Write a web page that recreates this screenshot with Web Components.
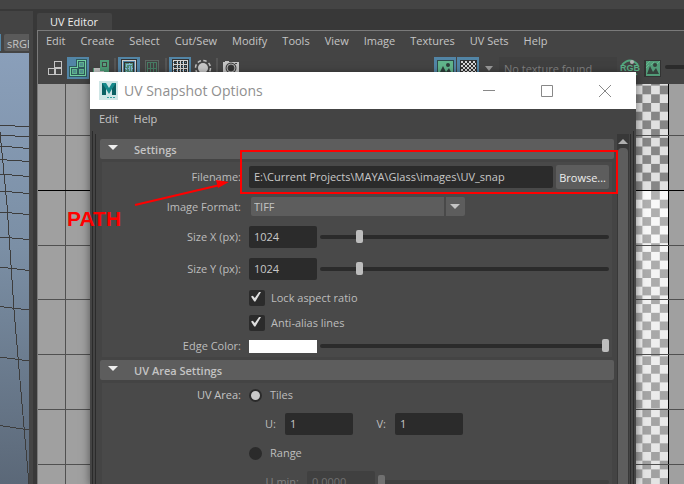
<!DOCTYPE html>
<html lang="en">
<head>
<meta charset="utf-8">
<title>UV Editor</title>
<style>
html, body { margin: 0; height: 100%; }
body { background: #383838; color: #c4c4c4; font: 11px/16px "Open Sans", "Noto Sans", sans-serif; overflow: hidden; }
</style>
</head>
<body>
<app-shell></app-shell>

<template id="app-shell">
<style>
:host { display: grid; position: relative; height: 100vh; grid-template-columns: 33px minmax(0, 1fr); column-gap: 4px; grid-template-rows: 9px minmax(0, 1fr); overflow: hidden; }
.strip { grid-column: 1 / -1; background: #444; }
</style>
<div class="strip"></div>
<persp-panel></persp-panel>
<uv-editor></uv-editor>
<snapshot-dialog></snapshot-dialog>
<path-note></path-note>
</template>

<template id="persp-panel">
<style>
:host { display: flex; flex-direction: column; background: #444; margin-top: 2px; padding-right: 4px; overflow: hidden; }
header { display: flex; gap: 3px; padding: 23px 0 2px; }
i { width: 1px; background: #5285a6; }
button { all: unset; box-sizing: border-box; flex: 1; min-width: 0; height: 17px; line-height: 19px; padding-left: 3px; background: #5a5a5a; border-radius: 2px 0 0 2px; overflow: hidden; white-space: nowrap; }
svg { display: block; flex: 1; min-height: 0; width: 100%; background: linear-gradient(#8a9fba, #7b8fa5 45%, #5b6878); }
</style>
<header><i></i><button>sRGB</button></header>
<svg viewBox="0 53 29 431" preserveAspectRatio="xMinYMin slice" fill="none" stroke="#3d3d3d" shape-rendering="crispEdges" aria-hidden="true">
<path d="M0 125l29 2M0 135l29 2M0 146l29 2.500M0 159.500l29 2M0 174l29 2.500M0 191l29 2.500M0 212l29 2.500M0 237l29 2.500M0 267l29 3.500M0 306.500l29 3.500M0 357l29 4M0 425.500l29 4.500M0 132L7 205L14 310L24 427L29 484"/>
</svg>
</template>

<template id="uv-editor">
<style>
:host { display: flex; flex-direction: column; min-width: 0; margin-top: 4px; }
h1 { margin: 0; align-self: flex-start; padding: 0 14px 0 13px; height: 17px; line-height: 18px; font-size: 11px; font-weight: 400; color: #eee; background: #444; border-radius: 2px 2px 0 0; }
section { flex: 1; min-height: 0; display: flex; flex-direction: column; border: 1px solid #7a7a7a; border-width: 1px 0 0 1px; background: #444; }
</style>
<h1>UV Editor</h1>
<section>
<menu-bar items="Edit,Create,Select,Cut/Sew,Modify,Tools,View,Image,Textures,UV Sets,Help"></menu-bar>
<uv-toolbar></uv-toolbar>
<uv-canvas></uv-canvas>
</section>
</template>

<template id="menu-bar">
<style>
:host { display: block; padding: 0 8px; }
nav { display: flex; gap: 15px; height: 20px; }
button { all: unset; line-height: 18px; white-space: nowrap; }
</style>
<nav></nav>
</template>

<template id="tool-button">
<style>
:host { display: block; width: 22px; height: 22px; flex: none; }
button { all: unset; display: block; width: 22px; height: 22px; }
:host([active]) button { background: #5285a6; }
::slotted(svg) { display: block; }
</style>
<button><slot></slot></button>
</template>

<template id="uv-toolbar">
<style>
:host { display: flex; gap: 1px; height: 27px; padding: 6px 0 0 6px; color: #bebebe; overflow: hidden; }
.sep { width: 2px; margin: 1px; height: 20px; background: #555; flex: none; }
.space { flex: 1; }
.drop { all: unset; width: 18px; height: 22px; flex: none; display: grid; place-items: center; }
.drop svg { display: block; }
.tex { all: unset; box-sizing: border-box; width: 118px; flex: none; height: 22px; padding: 0 5px; background: #404040; color: #767676; font: inherit; }
.tex::placeholder { color: #808080; opacity: 1; }
.rail { width: 19px; height: 4px; margin: 8px 0 0 1px; border-radius: 2px 0 0 2px; background: #2b2b2b; flex: none; }
</style>
<tool-button label="Wireframe"><svg width="22" height="22" fill="none" stroke="#c4c4c4" shape-rendering="crispEdges"><path d="M10.500 4.500h7v6h-7zM4.500 11.500h6v6h-6zM11.500 11.500h6v6h-6z"/></svg></tool-button>
<tool-button active label="Shaded"><svg width="22" height="22" fill="#58977c" stroke="#73d1a2" shape-rendering="crispEdges"><path stroke="#2f5a5c" stroke-width="3" d="M10.500 3.500h8v15h-15v-8h7z"/><path fill="#2f5a5c" d="M10.500 3.500h8v15h-15v-8h7z"/><path stroke="none" fill="#5fb38c" d="M12 5h5v5h-5zM5 12h5v5H5zM12 12h5v5h-5z"/><path stroke="none" fill="#4f8f8c" d="M13 6h3v3h-3zM6 13h3v3H6zM13 13h3v3h-3z"/></svg></tool-button>
<tool-button label="Distortion"><svg width="22" height="22" shape-rendering="crispEdges"><path fill="#4e9b76" d="M10 3h9v16H3v-8h7z"/><path fill="#444" d="M12 5h5v5h-5z"/><path fill="#58a07d" d="M13 6h3v3h-3z"/><path fill="#c4c4c4" d="M4 11h6v3h4v4H4z"/></svg></tool-button>
<span class="sep"></span>
<tool-button active label="Texture borders"><svg width="22" height="22" fill="none" shape-rendering="crispEdges"><path stroke="#333" d="M3.500 2.500h15v17h-15z"/><path stroke="#d0d0d0" d="M4.500 3.500h13v16h-13z"/><path stroke="#333" fill="#508d78" d="M6.500 5.500h9v12h-9z"/><path stroke="#84b8d8" stroke-dasharray="2 1" d="M8.500 7.500h5v8h-5zM11.500 6v11M7 11.500h8"/></svg></tool-button>
<tool-button label="Borders"><svg width="22" height="22" fill="none" shape-rendering="crispEdges"><path stroke="#5c6762" d="M4.500 3.500h13v16h-13z"/><path stroke="#477d64" d="M6.500 5.500h9v12h-9zM9.500 6v11M12.500 6v11M6 11.500h9"/></svg></tool-button>
<span class="sep"></span>
<tool-button active label="Grid"><svg width="22" height="22" fill="none" shape-rendering="crispEdges"><path fill="#333" d="M3 2h17v18H3z"/><path stroke="#d4d4d4" d="M4.500 3.500h14v15h-14zM8.500 3v16M11.500 3v16M14.500 3v16M4 7.500h15M4 11.500h15M4 15.500h15"/><path stroke="#5285a6" stroke-dasharray="1 2" d="M4 5.500h15M4 9.500h15M4 13.500h15"/></svg></tool-button>
<tool-button label="Isolate"><svg width="22" height="22" fill="none"><circle cx="11" cy="11" r="5" fill="#c8c8c8"/><circle cx="11" cy="11" r="7.500" stroke="#c0c0c0" stroke-width="1.500" stroke-dasharray="3.500 2.400"/></svg></tool-button>
<span class="sep"></span>
<tool-button label="Snapshot"><svg width="22" height="22"><path fill="#c4c4c4" d="M3 5h2V4h4v1h10v13H3z"/><path fill="#444" d="M15 6h2v1h-2z"/><circle cx="11" cy="11" r="5.500" fill="#444"/><circle cx="11" cy="11" r="4" fill="none" stroke="#aaa"/><circle cx="11" cy="11" r="2.700" fill="#333"/></svg></tool-button>
<span class="space"></span>
<tool-button active label="Show image"><svg width="22" height="22"><path fill="#2f4a4b" d="M3 3h17v17H3z"/><path fill="#61b58b" d="M4 4h15v15H4z"/><path fill="#2d3e3a" d="M5 17l4-8 3 6 3-4 3 6z"/><circle cx="14" cy="8" r="2" fill="#2d3e3a"/></svg></tool-button>
<tool-button active label="Checker map"><svg width="22" height="22" shape-rendering="crispEdges"><defs><pattern id="chk" width="4" height="4" patternUnits="userSpaceOnUse"><path fill="#303030" d="M0 0h4v4H0z"/><path fill="#d4d4d4" d="M0 0h2v2H0zM2 2h2v2H2z"/></pattern></defs><path fill="#303030" d="M3 3h17v17H3z"/><path fill="url(#chk)" d="M4 4h15v15H4z"/></svg></tool-button>
<button class="drop" aria-label="Checker options"><svg width="8" height="5"><path fill="#999" d="M0 0h8L4 5z"/></svg></button>
<input class="tex" placeholder="No texture found" aria-label="Texture">
<tool-button label="RGB channels"><svg width="24" height="22" overflow="visible"><path d="M4 8Q12-1 20 8" fill="none" stroke="#52a67d" stroke-width="2"/><circle cx="14" cy="5" r="2" fill="#b0b0b0"/><text x="2" y="14" font-family="Liberation Sans" font-size="9" font-weight="700" fill="#5ab288">RGB</text><path d="M5 17q7 4 14 0" fill="none" stroke="#52a67d" stroke-width="2"/></svg></tool-button>
<tool-button label="Dim image"><svg width="22" height="22"><path fill="#333" d="M3 3h17v17H3z"/><path fill="#529b78" d="M5 4h14v15H5z"/><path fill="#35423c" d="M6 17l3-8 3 6 3-4 3 6z"/><circle cx="14" cy="8" r="2" fill="#35423c"/><path stroke="#66b88e" d="M5 8l4-4M5 11l3-3M16 7l3-3M10 8l3-3"/></svg></tool-button>
<span class="rail"></span>
</template>

<template id="uv-canvas">
<style>
:host { display: grid; flex: 1; min-height: 0; background: #a0a0a0; overflow: hidden; }
svg { grid-area: 1 / 1; width: 100%; height: 100%; display: block; }
.tiles { width: 120px; justify-self: end; }
</style>
<svg class="tiles" aria-hidden="true">
<defs>
<pattern id="hi" width="17.400" height="17.400" x="104.500" y="107" patternUnits="userSpaceOnUse"><path fill="#fafafa" d="M0 0h18v18H0z"/><path fill="#b0b0b0" d="M0 0h8.700v8.700H0zM8.700 8.700h8.700v8.700H8.700z"/></pattern>
<pattern id="lo" width="17.400" height="17.400" x="104.500" y="106" patternUnits="userSpaceOnUse"><path fill="#e0e0e0" d="M0 0h18v18H0z"/><path fill="#868686" d="M8.700 0h8.700v8.700H8.700zM0 8.700h8.700v8.700H0z"/></pattern>
<linearGradient id="dim" x2="0" y2="1"><stop stop-opacity="0"/><stop offset="1" stop-opacity=".09"/></linearGradient>
</defs>
<rect width="104" height="106" fill="url(#lo)"/>
<rect y="107" width="104" height="4000" fill="url(#hi)"/>
<rect y="107" width="104" height="293" fill="url(#dim)"/>
<path stroke="#000" d="M104.500 0v4000"/>
</svg>
<svg shape-rendering="crispEdges" aria-hidden="true">
<path stroke="#505050" d="M27.500 0v4000M0 51.500h4000M0 161.500h4000M0 215.500h4000M0 270.500h4000M0 325.500h4000M0 380.500h4000"/>
<path stroke="#000" d="M0 106.500h4000"/>
</svg>
</template>

<template id="title-bar">
<style>
:host { display: flex; align-items: center; height: 37px; padding: 0 8px 0 9px; background: #fff; color: #8f8f8f; }
h2 { margin: 0 auto 0 6px; font-size: 14px; line-height: 20px; font-weight: 400; }
button { all: unset; width: 46px; height: 30px; margin-left: 12px; display: grid; place-items: center; }
svg { display: block; }
</style>
<svg width="19" height="19" viewBox="0 0 19 19"><path fill="#cfe6e6" d="M0 0h19v19H0z"/><path fill="#178a8c" d="M3 14V2h4l3 5 3-5h4v12h-4V8l-3 5-3-5v6z"/><path fill="#0b6063" d="M3 14V2l4 6v6zM13 8l4-6v12h-4z"/><path stroke="#39a3a3" stroke-dasharray="2 1" d="M8 16.500h9"/></svg>
<h2><slot></slot></h2>
<button aria-label="Minimize"><svg width="12" height="12"><path stroke="#888" d="M0 5.500h12"/></svg></button>
<button aria-label="Maximize"><svg width="12" height="12"><path fill="none" stroke="#888" d="M.5.5h11v11H.5z"/></svg></button>
<button aria-label="Close"><svg width="12" height="12"><path stroke="#888" d="M0 0l12 12M12 0L0 12"/></svg></button>
</template>

<template id="option-section">
<style>
:host { display: block; margin-bottom: 3px; }
h3 { margin: 0 0 3px; font-size: 11px; line-height: 20px; font-weight: 600; }
button { all: unset; box-sizing: border-box; display: flex; gap: 16px; width: 100%; height: 20px; padding-left: 8px; background: #5d5d5d; border-radius: 2px; color: #c4c4c4; line-height: 21px; }
svg { display: block; margin-top: 6px; }
.body { margin: 0 2px; background: #494949; }
</style>
<h3><button aria-expanded="true"><svg width="10" height="5"><path fill="#eee" d="M0 0h10L5 5z"/></svg><span></span></button></h3>
<div class="body"><slot></slot></div>
</template>

<template id="form-row">
<style>
:host { display: grid; grid-template-columns: 139px minmax(0, 1fr); column-gap: 8px; align-items: center; height: var(--row, 32px); padding-right: 3px; }
.name { text-align: right; }
.field { display: flex; align-items: center; gap: 3px; }
</style>
<span class="name"><slot name="label"></slot></span>
<span class="field"><slot></slot></span>
</template>

<template id="scroll-rail">
<style>
:host { display: flex; flex-direction: column; width: 12px; background: #383838; }
button { all: unset; height: 14px; display: grid; place-items: center; }
svg { display: block; }
div { flex: 1; margin: 0 1px; border-radius: 4px 4px 0 0; background: #5d5d5d; }
</style>
<button aria-label="Scroll up"><svg width="10" height="5"><path fill="#b0b0b0" d="M5 0l5 5H0z"/></svg></button>
<div></div>
</template>

<template id="snapshot-dialog">
<style>
:host { position: absolute; left: 90px; right: 48px; top: 72px; bottom: 0; display: flex; flex-direction: column; background: #444; box-shadow: 0 2px 9px rgba(0, 0, 0, .5); overflow: hidden; }
menu-bar { padding: 0 9px; margin-bottom: 2px; }
.outer { flex: 1; min-height: 0; display: flex; margin: 0 2px; border: solid #2b2b2b; border-width: 0 1px; }
.inner { flex: 1; min-width: 0; display: flex; margin: 3px 2px 0; border: solid #2b2b2b; border-width: 0 1px; }
.content { flex: 1; min-width: 0; padding: 5px 3px 0 4px; }
scroll-rail { margin-right: 1px; }
label { color: #bdbdbd; }
.text { all: unset; box-sizing: border-box; width: 68px; height: 22px; padding: 0 5px; border-radius: 2px; background: #2b2b2b; color: #c8c8c8; line-height: 22px; flex: none; }
.text.wide { flex: 1; width: auto; min-width: 0; }
.text:disabled { background: #404040; color: #707070; }
.browse { all: unset; box-sizing: border-box; height: 24px; padding: 1px 3px 0; line-height: 23px; border-radius: 2px; background: #5d5d5d; color: #eee; white-space: nowrap; }
.pick { display: grid; width: 214px; margin-left: 2px; }
.pick > * { grid-area: 1 / 1; }
.pick svg { justify-self: end; pointer-events: none; z-index: 1; }
select { appearance: none; box-sizing: border-box; width: 100%; height: 19px; border: 0; border-radius: 2px; padding: 1px 3px 0; margin: 0; font: inherit; color: #c4c4c4; background: #5d5d5d; }
input[type=range] { appearance: none; flex: 1; min-width: 0; margin: 0; height: 14px; background: none; }
input[type=range]::-webkit-slider-runnable-track { height: 4px; border-radius: 2px; background: #2b2b2b; }
input[type=range]::-webkit-slider-thumb { appearance: none; width: 7px; height: 13px; margin-top: -5px; border-radius: 2px; background: #bdbdbd; }
input[type=range]:disabled::-webkit-slider-runnable-track { background: #404040; }
input[type=range]:disabled::-webkit-slider-thumb { background: #707070; }
input[type=checkbox] { appearance: none; display: grid; margin: 0 3px 0 0; width: 16px; height: 16px; border-radius: 2px; background: #2b2b2b; }
input[type=checkbox]::before { content: ""; width: 10px; height: 10px; margin: 2px; background: #ddd; clip-path: polygon(0 50%, 18% 42%, 38% 66%, 84% 0, 100% 6%, 44% 100%, 32% 100%); }
input[type=radio] { appearance: none; margin: 0 5px 0 0; width: 13px; height: 13px; border-radius: 50%; background: #2b2b2b; }
input[type=radio]:checked { background: #c8c8c8; border: 2px solid #2b2b2b; }
input[type=color] { appearance: none; box-sizing: border-box; width: 68px; height: 13px; border: 0; padding: 0; margin: 0; background: #fff; flex: none; }
input[type=color]::-webkit-color-swatch-wrapper { padding: 0; }
input[type=color]::-webkit-color-swatch { border: 0; }
.sub { width: 27px; margin-right: 6px; text-align: right; flex: none; }
.sub.v { width: 30px; }
.sub.min { width: 50px; margin-right: 5px; }
.off { color: #808080; }
</style>
<title-bar>UV Snapshot Options</title-bar>
<menu-bar items="Edit,Help"></menu-bar>
<div class="outer"><div class="inner">
<div class="content">
<option-section heading="Settings">
<form-row style="--row:30px"><label slot="label" for="file">Filename:</label><input id="file" class="text wide" value="E:\Current Projects\MAYA\Glass\images\UV_snap"><button class="browse">Browse...</button></form-row>
<form-row style="--row:29px"><label slot="label" for="format">Image Format:</label><span class="pick"><select id="format"><option>TIFF</option></select><svg width="21" height="19"><path fill="#494949" d="M0 0h2v19H0z"/><path fill="#c4c4c4" d="M6 7h10l-5 5z"/></svg></span></form-row>
<form-row><label slot="label" for="sx">Size X (px):</label><input id="sx" class="text" value="1024"><input type="range" max="8192" value="1060" aria-label="Size X"></form-row>
<form-row><label slot="label" for="sy">Size Y (px):</label><input id="sy" class="text" value="1024"><input type="range" max="8192" value="1060" aria-label="Size Y"></form-row>
<form-row style="--row:25px"><input id="lock" type="checkbox" checked><label for="lock">Lock aspect ratio</label></form-row>
<form-row style="--row:25px"><input id="aa" type="checkbox" checked><label for="aa">Anti-alias lines</label></form-row>
<form-row style="--row:22px"><label slot="label" for="edge">Edge Color:</label><input id="edge" type="color" value="#ffffff"><input type="range" value="100" aria-label="Edge brightness"></form-row>
</option-section>
<option-section heading="UV Area Settings">
<form-row style="--row:24px"><span slot="label">UV Area:</span><input id="tiles" type="radio" name="area" checked><label for="tiles">Tiles</label></form-row>
<form-row style="--row:34px"><label class="sub" for="u">U:</label><input id="u" class="text" value="1"><label class="sub v" for="v">V:</label><input id="v" class="text" value="1"></form-row>
<form-row style="--row:24px"><input id="range" type="radio" name="area"><label for="range">Range</label></form-row>
<form-row style="--row:34px"><label class="sub min off" for="umin">U min:</label><input id="umin" class="text" value="0.0000" disabled><input type="range" value="0" aria-label="U min" disabled></form-row>
</option-section>
</div>
<scroll-rail></scroll-rail>
</div></div>
</template>

<template id="path-note">
<style>
:host { display: contents; color: #f00; }
.box { position: absolute; left: 240px; right: 66px; top: 150px; height: 40px; border: 2px solid #f00; pointer-events: none; }
.word { position: absolute; left: 67px; top: 207px; font: 700 21px/24px "Liberation Sans", sans-serif; }
svg { position: absolute; left: 130px; top: 175px; pointer-events: none; }
</style>
<div class="box"></div>
<svg width="105" height="35" aria-hidden="true"><path d="M5 30L90 10" stroke="#f00" stroke-width="2"/><path d="M99 7L86 5l2 8z" fill="#f00"/></svg>
<span class="word">PATH</span>
</template>

<script>
class TemplateElement extends HTMLElement {
  connectedCallback() {
    if (this.shadowRoot) return;
    const root = this.attachShadow({ mode: 'open' });
    root.append(document.getElementById(this.localName).content.cloneNode(true));
    this.ready(root);
  }
  ready() {}
}
customElements.define('menu-bar', class extends TemplateElement {
  ready(root) {
    for (const text of this.getAttribute('items').split(',')) {
      const button = document.createElement('button');
      button.textContent = text;
      root.querySelector('nav').append(button);
    }
  }
});
customElements.define('tool-button', class extends TemplateElement {
  ready(root) { root.querySelector('button').setAttribute('aria-label', this.getAttribute('label')); }
});
customElements.define('option-section', class extends TemplateElement {
  ready(root) { root.querySelector('span').textContent = this.getAttribute('heading'); }
});
for (const name of ['title-bar', 'form-row', 'scroll-rail', 'persp-panel', 'uv-toolbar', 'uv-canvas', 'uv-editor', 'snapshot-dialog', 'path-note', 'app-shell'])
  customElements.define(name, class extends TemplateElement {});
</script>
</body>
</html>
